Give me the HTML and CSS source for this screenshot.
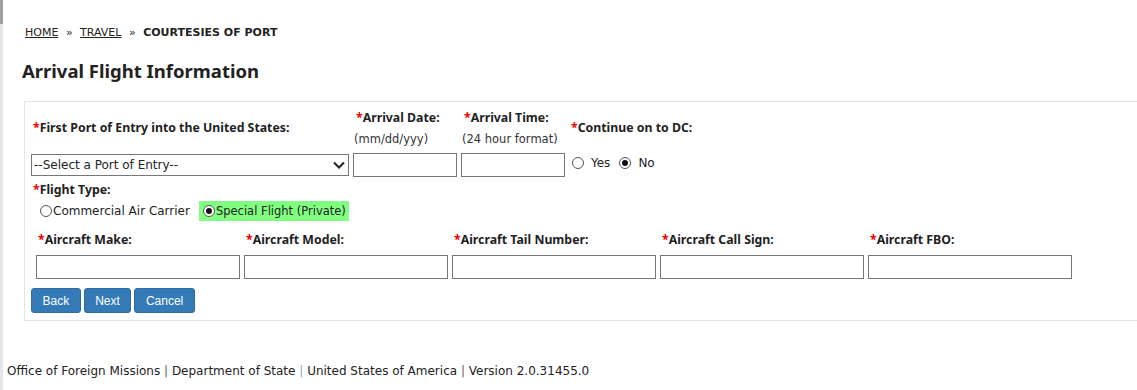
FILE: index.html
```html
<!DOCTYPE html>
<html lang="en">
<head>
    <meta charset="UTF-8">
    <title>Arrival Flight Information</title>
    <link rel="stylesheet" href="styles.css">
</head>
<body>
    <div class="page">
        <!-- Breadcrumb -->
        <div class="crumbs">
            <a href="#">HOME</a>
            <span class="sep">&raquo;</span>
            <a href="#">TRAVEL</a>
            <span class="sep">&raquo;</span>
            <b>COURTESIES OF PORT</b>
        </div>

        <h2 class="title">Arrival Flight Information</h2>

        <div class="panel">
            <!-- Row 1: port, date, time, DC -->
            <div class="row-top">
                <div class="field port">
                    <label class="lbl"><span class="req">*</span>First Port of Entry into the United States:</label>
                    <div class="sel-wrap">
                        <select class="sel">
                            <option>--Select a Port of Entry--</option>
                        </select>
                        <svg class="chev" width="12" height="8" viewBox="0 0 12 8"><path d="M1 1.5 L6 6.5 L11 1.5" fill="none" stroke="#222" stroke-width="2"/></svg>
                    </div>
                </div>
                <div class="field small">
                    <label class="lbl"><span class="req">*</span>Arrival Date:</label>
                    <span class="hint">(mm/dd/yyy)</span>
                    <input type="text" class="box">
                </div>
                <div class="field small">
                    <label class="lbl"><span class="req">*</span>Arrival Time:</label>
                    <span class="hint">(24 hour format)</span>
                    <input type="text" class="box">
                </div>
                <div class="field dc">
                    <label class="lbl"><span class="req">*</span>Continue on to DC:</label>
                    <div class="yesno">
                        <label><input type="radio" class="rad" name="dc"> Yes</label>
                        <label><input type="radio" class="rad" name="dc" checked> No</label>
                    </div>
                </div>
            </div>

            <!-- Row 2: flight type -->
            <div class="ftype">
                <label class="lbl"><span class="req">*</span>Flight Type:</label>
                <div class="ftype-opts">
                    <label class="opt"><input type="radio" class="rad" name="ft">Commercial Air Carrier</label>
                    <label class="opt picked"><input type="radio" class="rad" name="ft" checked>Special Flight (Private)</label>
                </div>
            </div>

            <!-- Row 3: aircraft -->
            <div class="aircraft">
                <div class="cell">
                    <label class="lbl"><span class="req">*</span>Aircraft Make:</label>
                    <input type="text" class="box">
                </div>
                <div class="cell">
                    <label class="lbl"><span class="req">*</span>Aircraft Model:</label>
                    <input type="text" class="box">
                </div>
                <div class="cell">
                    <label class="lbl"><span class="req">*</span>Aircraft Tail Number:</label>
                    <input type="text" class="box">
                </div>
                <div class="cell">
                    <label class="lbl"><span class="req">*</span>Aircraft Call Sign:</label>
                    <input type="text" class="box">
                </div>
                <div class="cell">
                    <label class="lbl"><span class="req">*</span>Aircraft FBO:</label>
                    <input type="text" class="box">
                </div>
            </div>

            <div class="buttons">
                <button class="btn">Back</button>
                <button class="btn">Next</button>
                <button class="btn">Cancel</button>
            </div>
        </div>

        <div class="footer">
            Office of Foreign Missions <span class="pipe">|</span> Department of State <span class="pipe blue">|</span> United States of America <span class="pipe">|</span> Version 2.0.31455.0
        </div>
    </div>
</body>
</html>
```

FILE: styles.css
```css
/* Page base */
body {
    margin: 0;
    padding: 0;
    font-family: "DejaVu Sans", Verdana, sans-serif;
    font-size: 12px;
    color: #222;
    background: #fff;
}

/* thin grey strip down the left edge */
.page {
    border-left: 3px solid #e2e5ea;
    border-image: linear-gradient(#a0a0a0 0 25px, #e2e5ea 25px) 1;
    min-height: 390px;
    box-sizing: border-box;
}

/* Breadcrumb */
.crumbs {
    padding: 26px 0 0 22px;
    font-size: 11px;
    line-height: 14px;
    color: #222;
}

.crumbs a {
    color: #222;
    text-decoration: underline;
}

.crumbs .sep {
    margin: 0 4px;
}

.title {
    margin: 19px 0 0 19px;
    font-family: "Noto Sans", sans-serif;
    font-size: 18.5px;
    line-height: 24px;
    font-weight: bold;
    color: #222;
}

/* Form panel */
.panel {
    margin: 18px 0 0 21px;
    border: 1px solid #e4e4e4;
    border-right: none;
    padding: 8px 0 7px 6px;
}

.lbl {
    font-family: "Noto Sans", sans-serif;
    font-weight: bold;
    font-size: 12.3px;
    line-height: 16px;
}

.req {
    color: #e00;
}

.hint {
    font-size: 11.5px;
    line-height: 16px;
    color: #333;
    margin-top: 5px;
    margin-left: -2px;
}

.row-top {
    display: flex;
    gap: 4px;
}

.field {
    display: flex;
    flex-direction: column;
}

/* port of entry */
.port {
    width: 318px;
}

.port .lbl {
    margin-top: 10px;
    padding-left: 2px;
}

.sel-wrap {
    position: relative;
    margin-top: 18px;
}

.sel {
    display: block;
    width: 318px;
    height: 22px;
    border: 1px solid #767676;
    font-family: inherit;
    font-size: 12px;
    color: #222;
    background: #fff;
    padding: 0 2px;
    appearance: none;
}

.chev {
    position: absolute;
    right: 4px;
    top: 7px;
}

/* date / time */
.small {
    width: 104px;
}

.small .lbl {
    padding-left: 3px;
}

.small .hint {
    padding-left: 3px;
}

.box {
    height: 24px;
    border: 1px solid #767676;
    box-sizing: border-box;
    font-family: inherit;
    font-size: 12px;
    padding: 0 4px;
}

.small .box {
    width: 104px;
    margin-top: 6px;
}

/* continue to DC */
.dc {
    padding-left: 2px;
}

.dc .lbl {
    margin-top: 10px;
}

.yesno {
    display: flex;
    gap: 8px;
    font-size: 12px;
    margin-top: 17px;
    line-height: 20px;
}

.yesno label {
    display: flex;
    align-items: center;
}

.yesno .rad {
    margin: 0 7px 0 1px;
}

/* plain old-style radio */
.rad {
    appearance: none;
    width: 12px;
    height: 12px;
    border: 1px solid #555;
    border-radius: 50%;
    background: #fff;
    box-sizing: border-box;
    position: relative;
    flex: none;
}

.rad:checked::after {
    content: "";
    position: absolute;
    left: 2px;
    top: 2px;
    width: 6px;
    height: 6px;
    border-radius: 50%;
    background: #111;
}

/* Flight type */
.ftype {
    margin-top: 5px;
    padding-left: 2px;
}

.ftype-opts {
    display: flex;
    gap: 9px;
    margin-top: 3px;
    padding-left: 7px;
    font-size: 12px;
}

.opt {
    display: flex;
    align-items: center;
    height: 20px;
}

.opt .rad {
    margin: 0 1px 0 0;
}

.opt.picked {
    background: #80ff80;
    padding: 0 3px 0 4px;
    font-size: 11.5px;
}

/* Aircraft row */
.aircraft {
    display: flex;
    gap: 4px;
    margin-top: 11px;
    padding-left: 5px;
}

.cell {
    display: flex;
    flex-direction: column;
    width: 204px;
}

.cell .lbl {
    padding-left: 2px;
    margin-bottom: 7px;
}

.cell .box {
    width: 204px;
}

/* Buttons */
.buttons {
    display: flex;
    gap: 3px;
    margin-top: 9px;
}

.btn {
    background: #337ab7;
    border: 1px solid #2e6da4;
    border-radius: 3px;
    color: #fff;
    font-family: "Liberation Sans", Arial, sans-serif;
    font-size: 12px;
    height: 25px;
    padding: 0 10.5px;
}

/* Footer */
.footer {
    margin-top: 42px;
    padding-left: 4px;
    font-size: 12px;
    line-height: 16px;
    color: #222;
}

.pipe {
    color: #666;
}

.pipe.blue {
    color: #8aa8c8;
}
```
